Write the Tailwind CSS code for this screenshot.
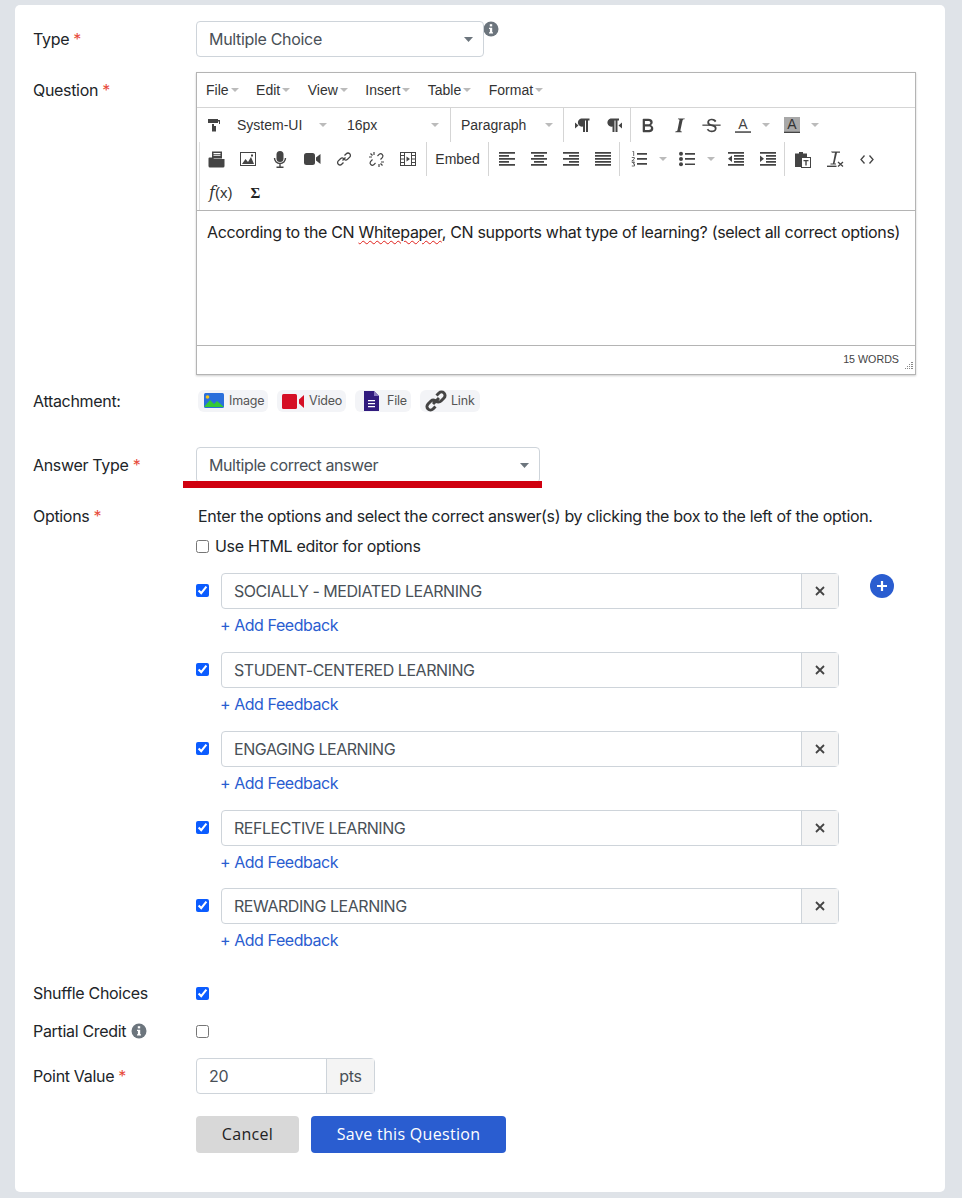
<!DOCTYPE html>
<html lang="en">
<head>
  <meta charset="UTF-8" />
  <title>Edit Question</title>
  <script src="https://cdn.jsdelivr.net/npm/@tailwindcss/browser@4"></script>
</head>
<body class="bg-[#dfe3e8] font-['Inter',sans-serif] text-[16px] text-[#212529] tracking-[-0.32px]">
  <div class="relative mx-[15px] mt-[5px] h-[1187px] w-[930px] rounded-[5px] bg-white pl-[18px] pt-[16px]">

    <!-- type -->
    <div class="flex">
      <label class="mt-[6px] w-[163px]">Type <span class="text-[#e74c3c]">*</span></label>
      <div class="relative flex h-[36px] w-[288px] items-center justify-between rounded-[4px] border border-[#ced4da] pl-[12px] pr-[10px] text-[#495057]">
        Multiple Choice
        <svg class="h-[5px] w-[9px] fill-[#6c757d]" viewBox="0 0 9 5"><polygon points="0,0 9,0 4.5,5"/></svg>
      </div>
      <svg class="ml-[-1px] mt-[0px] h-[16px] w-[16px]" viewBox="0 0 16 16"><circle cx="8" cy="8" r="7.5" fill="#6c757d"/><rect x="6.8" y="3.2" width="2.4" height="2.2" fill="#fff"/><path d="M6 6.7h3.2v4.6H10v1.200H6v-1.200h.9V7.900H6z" fill="#fff"/></svg>
    </div>

    <!-- question -->
    <div class="mt-[15px] flex">
      <label class="mt-[6px] w-[163px]">Question <span class="text-[#e74c3c]">*</span></label>
      <div class="h-[303px] w-[720px] border border-[#b4b4b4] font-['Liberation_Sans',sans-serif] text-[14px] text-[#333] tracking-normal shadow-[0_1px_2px_rgba(0,0,0,0.2)]">
        <div class="flex h-[35px] items-center gap-[17.5px] border-b border-[#d5d5d5] pl-[9px]">
          <span class="flex items-center gap-[2px]">File <svg class="h-[4px] w-[8px] fill-[#bbb]" viewBox="0 0 8 4"><polygon points="0,0 8,0 4,4"/></svg></span>
          <span class="flex items-center gap-[2px]">Edit <svg class="h-[4px] w-[8px] fill-[#bbb]" viewBox="0 0 8 4"><polygon points="0,0 8,0 4,4"/></svg></span>
          <span class="flex items-center gap-[2px]">View <svg class="h-[4px] w-[8px] fill-[#bbb]" viewBox="0 0 8 4"><polygon points="0,0 8,0 4,4"/></svg></span>
          <span class="flex items-center gap-[2px]">Insert <svg class="h-[4px] w-[8px] fill-[#bbb]" viewBox="0 0 8 4"><polygon points="0,0 8,0 4,4"/></svg></span>
          <span class="flex items-center gap-[2px]">Table <svg class="h-[4px] w-[8px] fill-[#bbb]" viewBox="0 0 8 4"><polygon points="0,0 8,0 4,4"/></svg></span>
          <span class="flex items-center gap-[2px]">Format <svg class="h-[4px] w-[8px] fill-[#bbb]" viewBox="0 0 8 4"><polygon points="0,0 8,0 4,4"/></svg></span>
        </div>

        <!-- toolbar row 1 -->
        <div class="flex h-[34px] items-center pl-[1px]">
          <div class="flex w-[32px] justify-center"><svg class="h-[14px] w-[14px] fill-[#444]" viewBox="0 0 14 14"><path d="M1 1h10v1H13v4H7v2H9v5.500H5V6h7V3.500h-1V5H1z"/></svg></div>
          <div class="flex w-[110px] items-center justify-between pl-[7px] pr-[13px]">System-UI <svg class="h-[4px] w-[8px] fill-[#bbb]" viewBox="0 0 8 4"><polygon points="0,0 8,0 4,4"/></svg></div>
          <div class="flex w-[111px] items-center justify-between self-stretch border-r border-[#d5d5d5] pl-[7px] pr-[11px]">16px <svg class="h-[4px] w-[8px] fill-[#bbb]" viewBox="0 0 8 4"><polygon points="0,0 8,0 4,4"/></svg></div>
          <div class="flex w-[113px] items-center justify-between self-stretch border-r border-[#d5d5d5] pl-[10px] pr-[10px]">Paragraph <svg class="h-[4px] w-[8px] fill-[#bbb]" viewBox="0 0 8 4"><polygon points="0,0 8,0 4,4"/></svg></div>
          <div class="flex w-[34px] justify-center pl-[2px]"><svg class="h-[16px] w-[16px] fill-[#444]" viewBox="0 0 16 16"><path d="M7 1.500h8.500v2h-1.500V15h-2V3.500h-1V15H9V9.500A4 4 0 0 1 7 1.500zM1 5.500l3.500 3L1 11.500z"/></svg></div>
          <div class="flex w-[32px] justify-center"><svg class="h-[16px] w-[16px] fill-[#444]" viewBox="0 0 16 16"><path d="M4.500 1.500h8.500v2h-1.500V15h-2V3.500h-1V15h-2V9.500a4 4 0 0 1 -2-8zM16 5.500l-3.500 3 3.500 3z"/></svg></div>
          <div class="w-[1px] self-stretch bg-[#d5d5d5]"></div>
          <div class="flex w-[32px] justify-center"><svg class="h-[23px] w-[23px] fill-[#444]" viewBox="0 0 24 24"><path d="M7.800 19c-.3 0-.5 0-.6-.2l-.2-.5V5.700c0-.2 0-.4.2-.5l.6-.2h5c1.500 0 2.700.3 3.500 1 .7.600 1.100 1.400 1.100 2.500a3 3 0 0 1-.6 1.900c-.4.600-1 1-1.600 1.200.4.100.9.300 1.300.6s.8.700 1 1.200c.4.400.5 1 .5 1.600 0 1.300-.4 2.300-1.300 3-.8.7-2.100 1-3.800 1H7.800zm5-8.300c.6 0 1.200-.1 1.600-.5.400-.3.600-.7.600-1.300 0-1.100-.8-1.700-2.400-1.700H9.300v3.500h3.500zm.5 6c.7 0 1.300-.1 1.700-.4.400-.4.600-.9.600-1.500s-.2-1-.7-1.400c-.4-.3-1-.4-2-.4H9.400v3.700h3.900z"/></svg></div>
          <div class="flex w-[32px] justify-center"><svg class="h-[23px] w-[23px] fill-[#444]" viewBox="0 0 24 24"><path d="M17.500 4.700l-.2.900h-.3c-.6 0-1 0-1.400.3-.3.300-.4.600-.5 1.100l-2.100 9.800v.6c0 .5.400.8 1.400.8h.2l-.2.800H7.500l.2-.8h.2c1.100 0 1.800-.5 2-1.500l2-9.800.1-.5c0-.6-.4-.8-1.400-.8h-.3l.2-.9h6.500z"/></svg></div>
          <div class="flex w-[32px] justify-center"><svg class="h-[23px] w-[23px] fill-[#444]" viewBox="0 0 24 24"><path d="M15.600 8.500c-.5-.7-1-1.100-1.300-1.300-.6-.4-1.300-.6-2-.6-2.700 0-2.800 1.700-2.800 2.100 0 1.600 1.800 2 3.200 2.300 4.400.9 4.600 2.800 4.600 3.900 0 1.400-.7 4.100-5 4.100A6.200 6.200 0 0 1 7 16.400l1.500-1.100c.4.600 1.600 2 3.700 2 1.600 0 2.500-.4 3-1.200.4-.8.3-2-.8-2.600-.7-.4-1.600-.7-2.900-1-1-.2-3.900-.8-3.900-3.600C7.600 6 10.300 5 12.400 5c2.900 0 4.200 1.600 4.700 2.400l-1.500 1.100z"/><rect x="2.500" y="11" width="19" height="1.300"/></svg></div>
          <div class="flex w-[32px] justify-center"><svg class="h-[16px] w-[16px]" viewBox="0 0 16 16"><text x="8" y="12" text-anchor="middle" font-size="14" fill="#444" font-family="Liberation Sans">A</text><rect y="14.300" width="16" height="1.500" fill="#444"/></svg></div>
          <div class="flex w-[14px] justify-center"><svg class="h-[4px] w-[8px] fill-[#bbb]" viewBox="0 0 8 4"><polygon points="0,0 8,0 4,4"/></svg></div>
          <div class="ml-[3px] flex w-[32px] justify-center"><svg class="h-[16px] w-[16px]" viewBox="0 0 16 16"><rect width="16" height="14.500" fill="#a8a8a8"/><text x="8" y="12" text-anchor="middle" font-size="14" fill="#333" font-family="Liberation Sans">A</text><rect y="14.500" width="16" height="1.500" fill="#444"/></svg></div>
          <div class="flex w-[14px] justify-center"><svg class="h-[4px] w-[8px] fill-[#bbb]" viewBox="0 0 8 4"><polygon points="0,0 8,0 4,4"/></svg></div>
        </div>

        <!-- toolbar rows 2 and 3 -->
        <div class="ml-[2px] border-l border-[#e2e2e2]">
          <div class="flex h-[34px] items-center">
            <div class="flex w-[32px] justify-center pl-[1px]"><svg class="h-[17px] w-[17px]" viewBox="0 0 17 17"><path d="M4 0.500h10v7H4z" fill="#444"/><path d="M5.500 2h7v.9h-7zm0 1.800h7v.9h-7z" fill="#fff"/><path d="M0.500 7.500a1 1 0 0 1 1-1H5l1 1.500h10.500V15a1.500 1.500 0 0 1-1.500 1.500H2A1.500 1.500 0 0 1 .5 15z" fill="#444"/></svg></div>
            <div class="flex w-[32px] justify-center"><svg class="h-[16px] w-[16px]" viewBox="0 0 16 16"><rect x="0.500" y="1.500" width="15" height="13" fill="#fff" stroke="#444"/><path d="M2 13l3.500-5 2.500 3 3-5 3 7z" fill="#444"/><rect x="11" y="3.500" width="2" height="2" fill="#444"/></svg></div>
            <div class="flex w-[32px] justify-center"><svg class="h-[17px] w-[14px]" viewBox="0 0 14 17"><rect x="3.500" y="0" width="7" height="11" rx="3.500" fill="#444"/><path d="M1.500 7a5.500 5.500 0 0 0 11 0M7 12.500V16M3.500 16.300h7" fill="none" stroke="#444" stroke-width="1.400"/></svg></div>
            <div class="flex w-[32px] justify-center"><svg class="h-[14px] w-[17px] fill-[#444]" viewBox="0 0 17 14"><rect y="1" width="11" height="12" rx="2.500"/><path d="M12 5.500L16.500 2v10L12 8.500z"/></svg></div>
            <div class="flex w-[32px] justify-center"><svg class="h-[16px] w-[16px]" viewBox="0 0 16 16" fill="none" stroke="#444" stroke-width="1.300"><path d="M6.500 9.500l3-3M8.500 4.500l1.800-1.800a2.400 2.400 0 0 1 3.400 0 2.400 2.400 0 0 1 0 3.400L11.500 8.300a2.400 2.400 0 0 1-3.300 0M7.500 11.500l-1.800 1.800a2.400 2.400 0 0 1-3.400 0 2.400 2.400 0 0 1 0-3.400L4.500 7.700a2.400 2.400 0 0 1 3.300 0"/></svg></div>
            <div class="flex w-[32px] justify-center"><svg class="h-[17px] w-[17px]" viewBox="0 0 17 17" fill="none" stroke="#444" stroke-width="1.200"><path d="M9.500 5l1.800-1.800a2.300 2.300 0 0 1 3.200 3.200L12.500 8.500M7.500 12l-1.800 1.800a2.300 2.300 0 0 1-3.200-3.200L4.500 8.500M6 1v3M1 6h3M11 16v-3M16 11h-3M2.500 2.500l2 2M14.500 14.500l-2-2"/></svg></div>
            <div class="flex w-[32px] justify-center"><svg class="h-[14px] w-[16px]" viewBox="0 0 16 14"><rect x="0.500" y="0.500" width="15" height="13" fill="#fff" stroke="#444"/><path d="M4.500 0v14M11.500 0v14M0 3.500h4.500M0 7h4.500M0 10.500h4.500M11.500 3.500H16M11.500 7H16M11.500 10.500H16" stroke="#444"/><path d="M6.500 4.500L10 7l-3.500 2.500z" fill="#444"/></svg></div>
            <div class="ml-[2px] h-full w-[1px] bg-[#d5d5d5]"></div>
            <div class="flex w-[61px] justify-center">Embed</div>
            <div class="h-full w-[1px] bg-[#d5d5d5]"></div>
            <div class="ml-[2px] flex w-[32px] justify-center"><svg class="h-[14px] w-[16px] fill-[#444]" viewBox="0 0 16 14"><path d="M0 0h16v1.700H0zM0 3h10v1.700H0zM0 6h16v1.700H0zM0 9h10v1.700H0zM0 12h16v1.700H0z"/></svg></div>
            <div class="flex w-[32px] justify-center"><svg class="h-[14px] w-[16px] fill-[#444]" viewBox="0 0 16 14"><path d="M0 0h16v1.700H0zM3 3h10v1.700H3zM0 6h16v1.700H0zM3 9h10v1.700H3zM0 12h16v1.700H0z"/></svg></div>
            <div class="flex w-[32px] justify-center"><svg class="h-[14px] w-[16px] fill-[#444]" viewBox="0 0 16 14"><path d="M0 0h16v1.700H0zM6 3h10v1.700H6zM0 6h16v1.700H0zM6 9h10v1.700H6zM0 12h16v1.700H0z"/></svg></div>
            <div class="flex w-[32px] justify-center"><svg class="h-[14px] w-[16px] fill-[#444]" viewBox="0 0 16 14"><path d="M0 0h16v1.700H0zM0 3h16v1.700H0zM0 6h16v1.700H0zM0 9h16v1.700H0zM0 12h16v1.700H0z"/></svg></div>
            <div class="h-full w-[1px] bg-[#d5d5d5]"></div>
            <div class="ml-[3px] flex w-[32px] justify-center"><svg class="h-[16px] w-[16px]" viewBox="0 0 16 16"><path d="M6 2h10v1.700H6zM6 7h10v1.700H6zM6 12h10v1.700H6z" fill="#444"/><path d="M1.500 0.500h1.200v4.500M0.800 6.500h2.500v1.500L0.800 10h2.700M0.800 11.500h2.700l-1.200 1.500h1.200v2H0.800" fill="none" stroke="#444" stroke-width="0.800"/></svg></div>
            <div class="flex w-[16px] justify-center"><svg class="h-[4px] w-[8px] fill-[#bbb]" viewBox="0 0 8 4"><polygon points="0,0 8,0 4,4"/></svg></div>
            <div class="flex w-[32px] justify-center"><svg class="h-[16px] w-[16px] fill-[#444]" viewBox="0 0 16 16"><circle cx="2" cy="2.700" r="2"/><circle cx="2" cy="8" r="2"/><circle cx="2" cy="13.300" r="2"/><path d="M6 2h10v1.700H6zM6 7h10v1.700H6zM6 12.400h10v1.700H6z"/></svg></div>
            <div class="flex w-[16px] justify-center"><svg class="h-[4px] w-[8px] fill-[#bbb]" viewBox="0 0 8 4"><polygon points="0,0 8,0 4,4"/></svg></div>
            <div class="ml-[1px] flex w-[32px] justify-center"><svg class="h-[14px] w-[16px] fill-[#444]" viewBox="0 0 16 14"><path d="M0 0h16v1.700H0zM6 3h10v1.700H6zM6 6h10v1.700H6zM6 9h10v1.700H6zM0 12h16v1.700H0zM4 3.500v6.500L0 6.800z"/></svg></div>
            <div class="flex w-[32px] justify-center"><svg class="h-[14px] w-[16px] fill-[#444]" viewBox="0 0 16 14"><path d="M0 0h16v1.700H0zM6 3h10v1.700H6zM6 6h10v1.700H6zM6 9h10v1.700H6zM0 12h16v1.700H0zM0 3.500v6.500l4-3.200z"/></svg></div>
            <div class="h-full w-[1px] bg-[#d5d5d5]"></div>
            <div class="ml-[2px] flex w-[32px] justify-center"><svg class="h-[17px] w-[16px]" viewBox="0 0 16 17"><path d="M0 2.500h4V1h4v1.500h4V6H6v10H0z" fill="#444"/><rect x="6.500" y="6.500" width="9" height="10" fill="#fff" stroke="#444"/><path d="M8.500 9h5v1.200h-1.800V14.500h-1.400V10.200H8.500z" fill="#444"/></svg></div>
            <div class="flex w-[32px] justify-center"><svg class="h-[16px] w-[17px]" viewBox="0 0 17 16"><path d="M4 0.500h9v1.300h-3L7.500 12.500H9v1H3.500v-1h2.400L8 1.800H5z" fill="#444"/><rect x="0" y="14.600" width="9.500" height="1.400" fill="#444"/><path d="M11 11l5 4.500M16 11l-5 4.500" stroke="#444" stroke-width="1.300"/></svg></div>
            <div class="flex w-[32px] justify-center"><svg class="h-[9px] w-[14px]" viewBox="0 0 14 9" fill="none" stroke="#444" stroke-width="1.300"><path d="M4.500 0.500L1 4.500l3.500 4M9.500 0.500l3.500 4-3.500 4"/></svg></div>
          </div>
          <div class="flex h-[34px] items-center">
            <div class="ml-[9px] flex items-baseline font-['DejaVu_Serif',serif] text-[16px]"><i>f</i><span class="font-['Liberation_Sans',sans-serif] text-[15px]">(x)</span></div>
            <div class="ml-[18px] font-['Liberation_Serif',serif] text-[15px] font-bold text-[#222]">Σ</div>
          </div>
        </div>

        <div class="h-[135px] whitespace-nowrap border-t border-[#b4b4b4] px-[10px] pt-[9px] font-['Inter',sans-serif] text-[16px] text-[#222] tracking-[-0.33px]">According to the CN <span class="underline decoration-[#e0201b] decoration-wavy decoration-1 underline-offset-2">Whitepaper</span>, CN supports what type of learning? (select all correct options)</div>
        <div class="relative flex h-[28px] items-center justify-end border-t border-[#b4b4b4] pr-[16px] text-[10.7px] text-[#444]">
          15 WORDS
          <svg class="absolute bottom-[2px] right-[2px] h-[9px] w-[9px] fill-[#888]" viewBox="0 0 9 9"><path d="M7 0h2v1H7zM5 2h1v1H5zM7 2h2v1H7zM3 4h1v1H3zM5 4h1v1H5zM7 4h2v1H7zM1 6h1v1H1zM3 6h1v1H3zM5 6h1v1H5zM7 6h2v1H7z"/></svg>
        </div>
      </div>
    </div>

    <!-- attachment -->
    <div class="mt-[14px] flex items-center">
      <label class="w-[163px]">Attachment:</label>
      <div class="flex h-[22px] gap-[9px] pl-[2px] text-[12.5px] text-[#555] tracking-[-0.2px]">
        <span class="flex w-[70px] items-center gap-[5px] rounded-[6px] bg-[#f3f4f7] pl-[6px]"><svg class="h-[16px] w-[20px]" viewBox="0 0 20 16"><rect width="20" height="15" rx="1.500" fill="#2a6fdb"/><path d="M0 14l6-7 4 4 3-3 7 6z" fill="#35c935"/><circle cx="3.500" cy="4" r="1.800" fill="#f5c518"/></svg><span class="pt-[1px]">Image</span></span>
        <span class="flex w-[69px] items-center gap-[5px] rounded-[6px] bg-[#f3f4f7] pl-[5px]"><svg class="h-[15px] w-[22px] fill-[#d50f25]" viewBox="0 0 22 15"><rect width="15" height="15" rx="1.500"/><path d="M17 5.500L22 1v13l-5-4.500z"/></svg><span class="pt-[1px]">Video</span></span>
        <span class="flex w-[56px] items-center gap-[8px] rounded-[6px] bg-[#f3f4f7] pl-[9px]"><svg class="h-[20px] w-[15px]" viewBox="0 0 15 20"><path d="M0 0h10l5 5v15H0z" fill="#311b7e"/><path d="M10 0l5 5h-5z" fill="#8a7cc0"/><path d="M4 9h7v1.300H4zM4 12h7v1.300H4zM4 15h7v1.300H4z" fill="#fff"/></svg><span class="pt-[1px]">File</span></span>
        <span class="flex w-[60px] items-center gap-[4px] rounded-[6px] bg-[#f3f4f7] pl-[5px]"><svg class="h-[22px] w-[22px]" viewBox="0 0 22 22" fill="none" stroke="#444" stroke-width="3"><path d="M8 14l6-6M11.500 5.500l2.500-2.500a3.500 3.500 0 0 1 5 5l-3 3a3.500 3.500 0 0 1-5 0M10.500 16.500l-2.500 2.500a3.500 3.500 0 0 1-5-5l3-3a3.500 3.500 0 0 1 5 0"/></svg><span class="pt-[1px]">Link</span></span>
      </div>
    </div>

    <!-- answer type -->
    <div class="relative mt-[34px] flex">
      <label class="mt-[6px] w-[163px]">Answer Type <span class="text-[#e74c3c]">*</span></label>
      <div class="flex h-[36px] w-[344px] items-center justify-between rounded-[4px] border border-[#ced4da] pl-[12px] pr-[10px] text-[#495057] tracking-[-0.42px]">
        Multiple correct answer
        <svg class="h-[5px] w-[9px] fill-[#6c757d]" viewBox="0 0 9 5"><polygon points="0,0 9,0 4.500,5"/></svg>
      </div>
      <div class="absolute left-[150px] top-[34px] h-[7px] w-[359px] bg-[#d0000f]"></div>
    </div>

    <!-- options -->
    <div class="mt-[21px] flex">
      <label class="w-[165px]">Options <span class="text-[#e74c3c]">*</span></label>
      <div class="text-[#212529]">Enter the options and select the correct answer(s) by clicking the box to the left of the option.</div>
    </div>
    <div class="mt-[6px] flex items-center pl-[163px] leading-[24px]">
      <input type="checkbox" class="mr-[6px] h-[13px] w-[13px]" />
      Use HTML editor for options
    </div>

    <div class="relative mt-[15px] ml-[163px] tracking-[-0.45px]">
      <div class="flex h-[79px] items-start">
        <input type="checkbox" checked class="mt-[11px] mr-[12px] h-[13px] w-[13px] accent-[#0b5cff]" />
        <div>
          <div class="flex h-[36px] w-[618px] rounded-[4px] border border-[#ced4da] text-[#495057]">
            <div class="flex flex-1 items-center pl-[12px]">SOCIALLY - MEDIATED LEARNING</div>
            <div class="flex w-[37px] items-center justify-center border-l border-[#ced4da] bg-[#f4f4f4]"><svg class="h-[10px] w-[10px]" viewBox="0 0 10 10" stroke="#444" stroke-width="1.800"><path d="M1 1l8 8M9 1l-8 8"/></svg></div>
          </div>
          <div class="mt-[4px] ml-[-1px] leading-[24px] text-[#2a5dd0]">+ Add Feedback</div>
        </div>
      </div>
      <div class="flex h-[79px] items-start">
        <input type="checkbox" checked class="mt-[11px] mr-[12px] h-[13px] w-[13px] accent-[#0b5cff]" />
        <div>
          <div class="flex h-[36px] w-[618px] rounded-[4px] border border-[#ced4da] text-[#495057]">
            <div class="flex flex-1 items-center pl-[12px]">STUDENT-CENTERED LEARNING</div>
            <div class="flex w-[37px] items-center justify-center border-l border-[#ced4da] bg-[#f4f4f4]"><svg class="h-[10px] w-[10px]" viewBox="0 0 10 10" stroke="#444" stroke-width="1.800"><path d="M1 1l8 8M9 1l-8 8"/></svg></div>
          </div>
          <div class="mt-[4px] ml-[-1px] leading-[24px] text-[#2a5dd0]">+ Add Feedback</div>
        </div>
      </div>
      <div class="flex h-[79px] items-start">
        <input type="checkbox" checked class="mt-[11px] mr-[12px] h-[13px] w-[13px] accent-[#0b5cff]" />
        <div>
          <div class="flex h-[36px] w-[618px] rounded-[4px] border border-[#ced4da] text-[#495057]">
            <div class="flex flex-1 items-center pl-[12px]">ENGAGING LEARNING</div>
            <div class="flex w-[37px] items-center justify-center border-l border-[#ced4da] bg-[#f4f4f4]"><svg class="h-[10px] w-[10px]" viewBox="0 0 10 10" stroke="#444" stroke-width="1.800"><path d="M1 1l8 8M9 1l-8 8"/></svg></div>
          </div>
          <div class="mt-[4px] ml-[-1px] leading-[24px] text-[#2a5dd0]">+ Add Feedback</div>
        </div>
      </div>
      <div class="flex h-[78px] items-start">
        <input type="checkbox" checked class="mt-[11px] mr-[12px] h-[13px] w-[13px] accent-[#0b5cff]" />
        <div>
          <div class="flex h-[36px] w-[618px] rounded-[4px] border border-[#ced4da] text-[#495057]">
            <div class="flex flex-1 items-center pl-[12px]">REFLECTIVE LEARNING</div>
            <div class="flex w-[37px] items-center justify-center border-l border-[#ced4da] bg-[#f4f4f4]"><svg class="h-[10px] w-[10px]" viewBox="0 0 10 10" stroke="#444" stroke-width="1.800"><path d="M1 1l8 8M9 1l-8 8"/></svg></div>
          </div>
          <div class="mt-[4px] ml-[-1px] leading-[24px] text-[#2a5dd0]">+ Add Feedback</div>
        </div>
      </div>
      <div class="flex h-[78px] items-start">
        <input type="checkbox" checked class="mt-[11px] mr-[12px] h-[13px] w-[13px] accent-[#0b5cff]" />
        <div>
          <div class="flex h-[36px] w-[618px] rounded-[4px] border border-[#ced4da] text-[#495057]">
            <div class="flex flex-1 items-center pl-[12px]">REWARDING LEARNING</div>
            <div class="flex w-[37px] items-center justify-center border-l border-[#ced4da] bg-[#f4f4f4]"><svg class="h-[10px] w-[10px]" viewBox="0 0 10 10" stroke="#444" stroke-width="1.800"><path d="M1 1l8 8M9 1l-8 8"/></svg></div>
          </div>
          <div class="mt-[4px] ml-[-1px] leading-[24px] text-[#2a5dd0]">+ Add Feedback</div>
        </div>
      </div>
      <!-- add option button sits beside the first row -->
      <div class="absolute left-[674px] top-[1px] flex h-[24px] w-[24px] items-center justify-center rounded-full bg-[#2a5dd0]"><svg class="h-[10px] w-[10px]" viewBox="0 0 10 10" stroke="#fff" stroke-width="2.200"><path d="M5 0v10M0 5h10"/></svg></div>
    </div>

    <!-- settings -->
    <div class="mt-[15px] flex items-center leading-[24px]">
      <label class="w-[163px]">Shuffle Choices</label>
      <input type="checkbox" checked class="h-[13px] w-[13px] accent-[#0b5cff]" />
    </div>
    <div class="mt-[14px] flex items-center leading-[24px]">
      <label class="flex w-[163px] items-center gap-[5px]">Partial Credit
        <svg class="h-[16px] w-[16px]" viewBox="0 0 16 16"><circle cx="8" cy="8" r="7.500" fill="#6c757d"/><rect x="6.800" y="3.200" width="2.400" height="2.200" fill="#fff"/><path d="M6 6.700h3.200v4.600H10v1.200H6v-1.200h.9V7.900H6z" fill="#fff"/></svg>
      </label>
      <input type="checkbox" class="h-[13px] w-[13px]" />
    </div>
    <div class="mt-[15px] flex items-center">
      <label class="w-[163px]">Point Value <span class="text-[#e74c3c]">*</span></label>
      <div class="flex h-[36px] w-[179px] rounded-[4px] border border-[#ced4da] text-[#495057]">
        <div class="flex flex-1 items-center pl-[12px]">20</div>
        <div class="flex w-[48px] items-center justify-center border-l border-[#ced4da] bg-[#f4f4f4]">pts</div>
      </div>
    </div>
    <div class="mt-[22px] flex gap-[12px] pl-[163px] font-['Open_Sans',sans-serif] tracking-[0.3px]">
      <button class="h-[37px] w-[103px] rounded-[4px] bg-[#d8d8d8] pb-[2px] text-[#222]">Cancel</button>
      <button class="h-[37px] w-[195px] rounded-[4px] bg-[#2a5dd0] pb-[2px] text-white">Save this Question</button>
    </div>
  </div>
</body>
</html>
